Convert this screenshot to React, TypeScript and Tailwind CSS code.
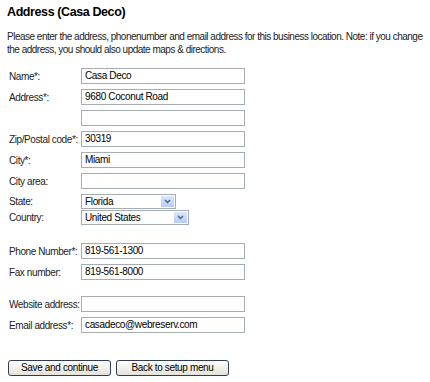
import React from 'react'

const fields1 = [
  { label: 'Name*:', value: 'Casa Deco' },
  { label: 'Address*:', value: '9680 Coconut Road' },
  { label: '', value: '' },
  { label: 'Zip/Postal code*:', value: '30319' },
  { label: 'City*:', value: 'Miami' },
  { label: 'City area:', value: '' },
]

function TextBox({ value }: { value: string }) {
  return (
    <div className="w-[164px] h-[16px] border border-[#a5acb2] bg-white pl-[3px] leading-[14px] text-[10px] tracking-[-0.35px] text-black">
      {value}
    </div>
  )
}

function SelectBox({ value, width }: { value: string; width: string }) {
  return (
    <div className={`${width} h-[15px] border border-[#a5acb2] bg-white flex items-stretch`}>
      <span className="flex-1 pl-[3px] leading-[13px] text-[10px] tracking-[-0.35px] text-black">{value}</span>
      <span className="w-[13px] m-[1px] bg-gradient-to-b from-[#dbe6fb] to-[#b7cbf3] flex items-center justify-center">
        <svg width="7" height="5" viewBox="0 0 7 5">
          <path d="M1 1 L3.5 3.5 L6 1" stroke="#4d6185" strokeWidth="1.5" fill="none" />
        </svg>
      </span>
    </div>
  )
}

function Row({ label, children }: { label: string; children: React.ReactNode }) {
  return (
    <div className="flex items-center h-[16px] mb-[5px]">
      <span className="w-[72px] text-[10px] tracking-[-0.4px] text-[#222] whitespace-nowrap">{label}</span>
      {children}
    </div>
  )
}

function Button({ label, width }: { label: string; width: string }) {
  return (
    <div className={`${width} h-[16px] rounded-[3px] border border-[#2d3b54] bg-gradient-to-b from-[#fefefe] to-[#e4e2d9] text-center text-[10px] tracking-[-0.35px] leading-[14px] text-black`}>
      {label}
    </div>
  )
}

export default function App() {
  return (
    <div className="w-[430px] h-[382px] bg-white font-['Liberation_Sans',Arial,sans-serif] text-[#222]">
      <h1 className="pl-[7px] pt-[4px] text-[12.5px] tracking-[-0.4px] font-bold leading-[16px] text-black">Address (Casa Deco)</h1>
      <p className="pl-[7px] pr-[2px] mt-[10px] text-[10px] tracking-[-0.5px] leading-[13px]">
        Please enter the address, phonenumber and email address for this business location. Note: if you change the address, you should also update maps &amp; directions.
      </p>

      <div className="pl-[9px] mt-[12px]">
        {fields1.map((f, i) => (
          <Row key={i} label={f.label}>
            <TextBox value={f.value} />
          </Row>
        ))}
        <div className="flex items-center h-[15px]">
          <span className="w-[72px] text-[10px] tracking-[-0.4px] whitespace-nowrap">State:</span>
          <SelectBox value="Florida" width="w-[95px]" />
        </div>
        <div className="flex items-center h-[15px] mt-[1px]">
          <span className="w-[72px] text-[10px] tracking-[-0.4px] whitespace-nowrap">Country:</span>
          <SelectBox value="United States" width="w-[108px]" />
        </div>

        <div className="mt-[18px]">
          <Row label="Phone Number*:">
            <TextBox value="819-561-1300" />
          </Row>
          <Row label="Fax number:">
            <TextBox value="819-561-8000" />
          </Row>
        </div>

        <div className="mt-[16px]">
          <Row label="Website address:">
            <TextBox value="" />
          </Row>
          <Row label="Email address*:">
            <TextBox value="casadeco@webreserv.com" />
          </Row>
        </div>

        <div className="flex gap-[5px] mt-[27px] -ml-[1px]">
          <Button label="Save and continue" width="w-[103px]" />
          <Button label="Back to setup menu" width="w-[113px]" />
        </div>
      </div>
    </div>
  )
}
